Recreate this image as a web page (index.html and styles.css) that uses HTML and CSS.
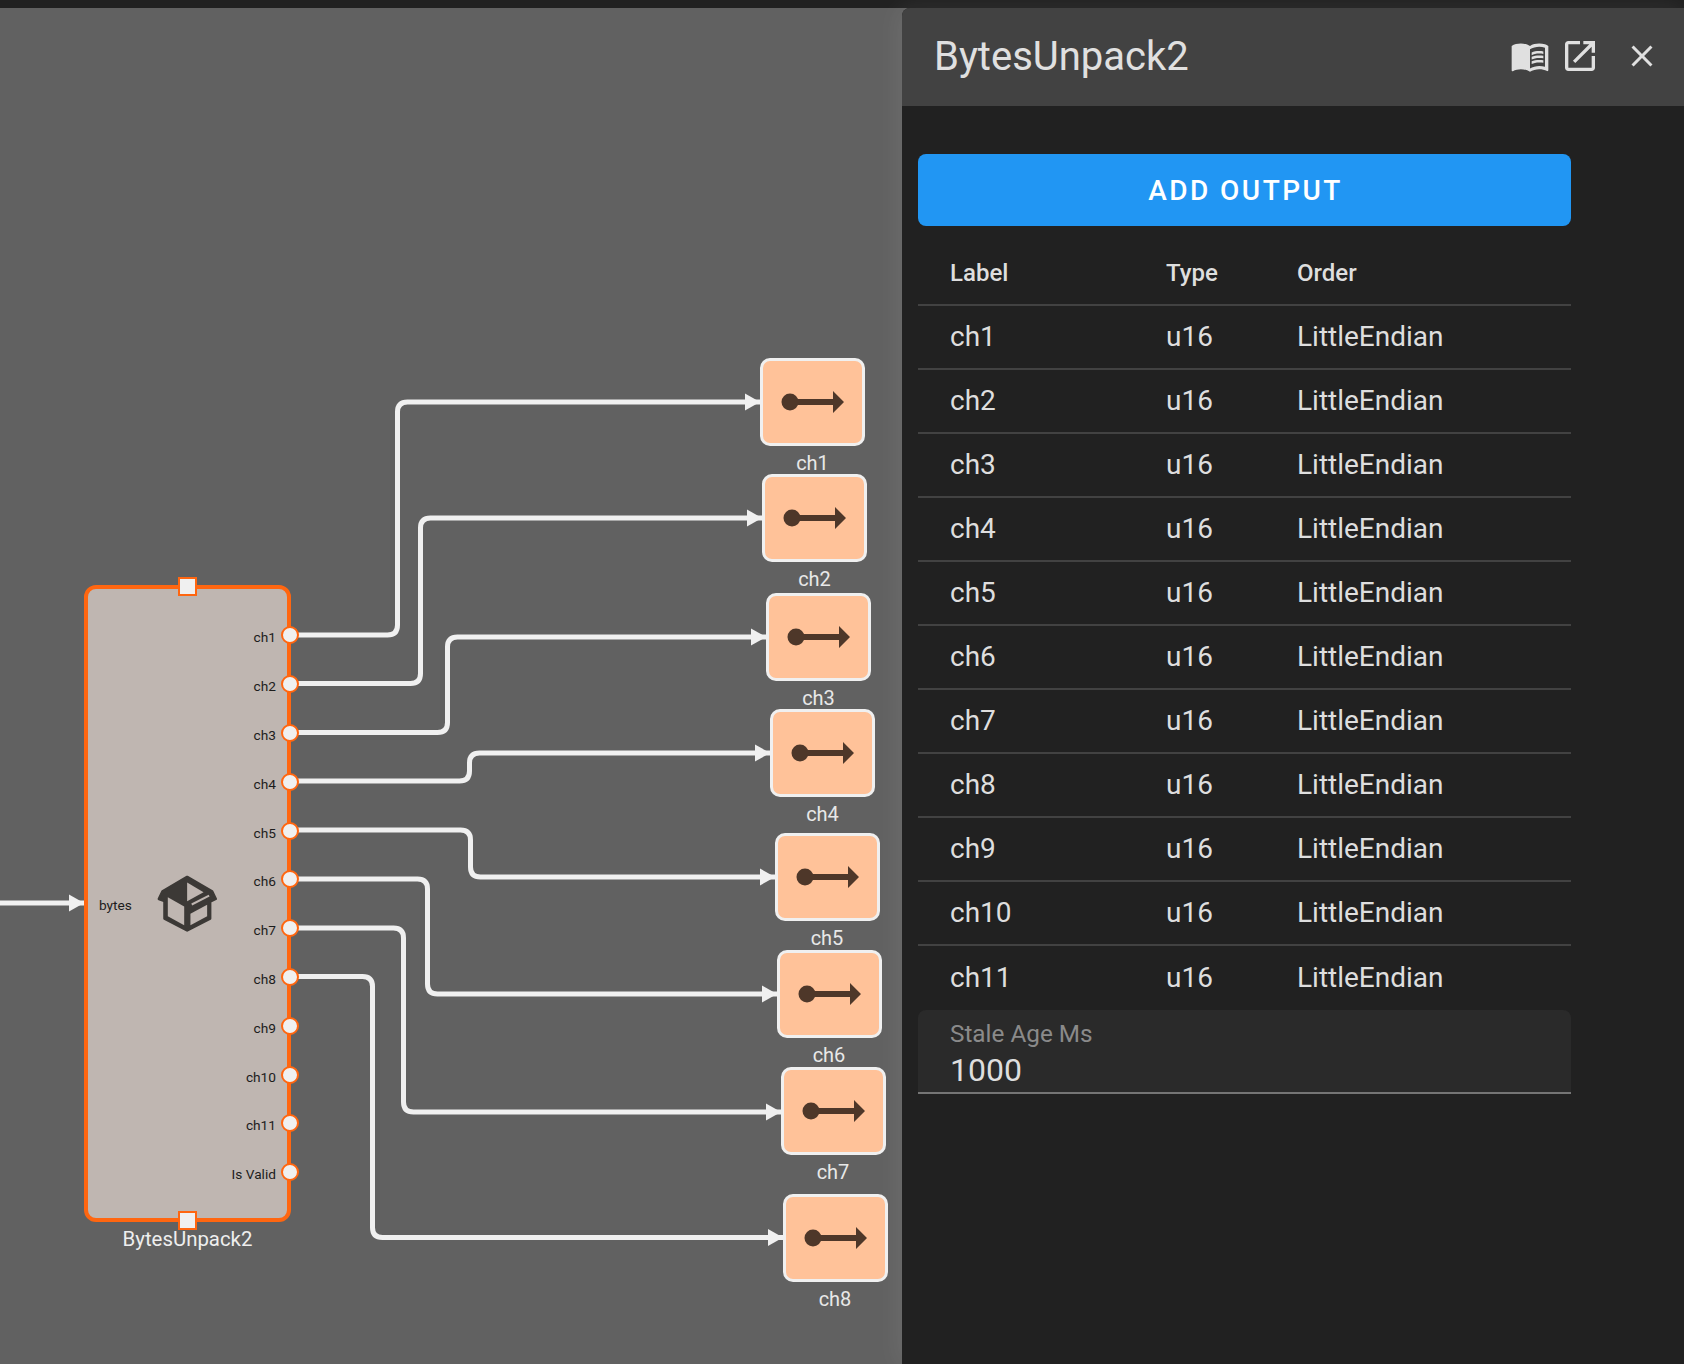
FILE: index.html
```html
<!DOCTYPE html>
<html lang="en">
<head>
<meta charset="utf-8">
<title>BytesUnpack2</title>
<link rel="stylesheet" href="styles.css">
</head>
<body>
<div class="app">
  <div class="topbar"></div>
  <div class="main">
    <div class="canvas">
      <svg class="wires" viewBox="0 8 902 1356" width="902" height="1356" aria-hidden="true">
        <defs>
          <marker id="head" markerUnits="userSpaceOnUse" markerWidth="16" markerHeight="18" refX="15" refY="9" orient="auto">
            <path d="M0 0.5 L15 9 L0 17.5 Z" fill="#f0f0f0"/>
          </marker>
        </defs>
        <g class="wire">
          <path marker-end="url(#head)" d="M0 903 H84"/>
          <path marker-end="url(#head)" d="M290 635 H387.5 Q397.5 635 397.5 625 V412 Q397.5 402 407.5 402 H760"/>
          <path marker-end="url(#head)" d="M290 683.5 H410.5 Q420.5 683.5 420.5 673.5 V528 Q420.5 518 430.5 518 H762"/>
          <path marker-end="url(#head)" d="M290 732.5 H437.5 Q447.5 732.5 447.5 722.5 V647 Q447.5 637 457.5 637 H766"/>
          <path marker-end="url(#head)" d="M290 781 H459.5 Q469.5 781 469.5 771 V763 Q469.5 753 479.5 753 H770"/>
          <path marker-end="url(#head)" d="M290 830 H460.5 Q470.5 830 470.5 840 V867 Q470.5 877 480.5 877 H775"/>
          <path marker-end="url(#head)" d="M290 879 H417.5 Q427.5 879 427.5 889 V984 Q427.5 994 437.5 994 H777"/>
          <path marker-end="url(#head)" d="M290 928 H393.5 Q403.5 928 403.5 938 V1102 Q403.5 1112 413.5 1112 H781"/>
          <path marker-end="url(#head)" d="M290 976.5 H362.5 Q372.5 976.5 372.5 986.5 V1227.5 Q372.5 1237.5 382.5 1237.5 H783"/>
        </g>
      </svg>

      <div class="block">
        <span class="handle handle-top"></span>
        <span class="in-label">bytes</span>
        <svg class="box-icon" viewBox="80 72 184 176" aria-hidden="true">
          <path class="box-fill" d="M172 78 L248 122 L259 145 L242 153 L242 205 L172 241 L103 205 L103 151 L86 145 L97 122 Z"/>
          <path class="box-light" d="M172 95 L222 125 L172 152 Z"/>
          <path class="box-light" d="M113 140 L163 168 L163 225 L113 198 Z"/>
          <path class="box-light" d="M182 190 L233 163 L233 198 L182 225 Z"/>
          <path class="box-slot" d="M186 162 L239 135"/>
        </svg>
        <div class="ports">
          <div class="port"><span>ch1</span><i></i></div>
          <div class="port"><span>ch2</span><i></i></div>
          <div class="port"><span>ch3</span><i></i></div>
          <div class="port"><span>ch4</span><i></i></div>
          <div class="port"><span>ch5</span><i></i></div>
          <div class="port"><span>ch6</span><i></i></div>
          <div class="port"><span>ch7</span><i></i></div>
          <div class="port"><span>ch8</span><i></i></div>
          <div class="port"><span>ch9</span><i></i></div>
          <div class="port"><span>ch10</span><i></i></div>
          <div class="port"><span>ch11</span><i></i></div>
          <div class="port"><span>Is Valid</span><i></i></div>
        </div>
        <span class="handle handle-bottom"></span>
        <span class="block-label">BytesUnpack2</span>
      </div>

      <div class="out o1"><div class="out-box"><svg viewBox="0 0 63 24"><circle cx="9" cy="12" r="8.5"/><path d="M9 9h43V1l11 11-11 11v-8H9z"/></svg></div><span>ch1</span></div>
      <div class="out o2"><div class="out-box"><svg viewBox="0 0 63 24"><circle cx="9" cy="12" r="8.5"/><path d="M9 9h43V1l11 11-11 11v-8H9z"/></svg></div><span>ch2</span></div>
      <div class="out o3"><div class="out-box"><svg viewBox="0 0 63 24"><circle cx="9" cy="12" r="8.5"/><path d="M9 9h43V1l11 11-11 11v-8H9z"/></svg></div><span>ch3</span></div>
      <div class="out o4"><div class="out-box"><svg viewBox="0 0 63 24"><circle cx="9" cy="12" r="8.5"/><path d="M9 9h43V1l11 11-11 11v-8H9z"/></svg></div><span>ch4</span></div>
      <div class="out o5"><div class="out-box"><svg viewBox="0 0 63 24"><circle cx="9" cy="12" r="8.5"/><path d="M9 9h43V1l11 11-11 11v-8H9z"/></svg></div><span>ch5</span></div>
      <div class="out o6"><div class="out-box"><svg viewBox="0 0 63 24"><circle cx="9" cy="12" r="8.5"/><path d="M9 9h43V1l11 11-11 11v-8H9z"/></svg></div><span>ch6</span></div>
      <div class="out o7"><div class="out-box"><svg viewBox="0 0 63 24"><circle cx="9" cy="12" r="8.5"/><path d="M9 9h43V1l11 11-11 11v-8H9z"/></svg></div><span>ch7</span></div>
      <div class="out o8"><div class="out-box"><svg viewBox="0 0 63 24"><circle cx="9" cy="12" r="8.5"/><path d="M9 9h43V1l11 11-11 11v-8H9z"/></svg></div><span>ch8</span></div>
    </div>

    <aside class="panel">
      <header class="panel-head">
        <h1>BytesUnpack2</h1>
        <div class="head-icons">
          <svg class="ic-book" viewBox="0 0 24 24"><path d="M21 5c-1.11-.35-2.33-.5-3.5-.5-1.95 0-4.05.4-5.5 1.5-1.45-1.1-3.55-1.5-5.5-1.5S2.45 4.9 1 6v14.65c0 .25.25.5.5.5.1 0 .15-.05.25-.05C3.1 20.45 5.05 20 6.5 20c1.95 0 4.05.4 5.5 1.5 1.35-.85 3.8-1.5 5.5-1.5 1.65 0 3.35.3 4.75 1.05.1.05.15.05.25.05.25 0 .5-.25.5-.5V6c-.6-.45-1.25-.75-2-1zm0 13.5c-1.1-.35-2.3-.5-3.5-.5-1.7 0-4.15.65-5.5 1.5V8c1.35-.85 3.8-1.5 5.5-1.5 1.2 0 2.4.15 3.5.5v11.5z"/><path d="M17.5 10.5c.88 0 1.73.09 2.5.26V9.24c-.79-.15-1.64-.24-2.5-.24-1.7 0-3.24.29-4.5.83v1.66c1.13-.64 2.7-.99 4.5-.99zM13 12.49v1.66c1.13-.64 2.7-.99 4.5-.99.88 0 1.73.09 2.5.26V11.9c-.79-.15-1.64-.24-2.5-.24-1.7 0-3.24.3-4.5.83zM17.5 14.33c-1.7 0-3.24.29-4.5.83v1.66c1.13-.64 2.7-.99 4.5-.99.88 0 1.73.09 2.5.26v-1.52c-.79-.16-1.64-.24-2.5-.24z"/></svg>
          <svg class="ic-open" viewBox="0 0 24 24"><path d="M19 19H5V5h7V3H5c-1.11 0-2 .9-2 2v14c0 1.1.89 2 2 2h14c1.1 0 2-.9 2-2v-7h-2v7zM14 3v2h3.59l-9.83 9.83 1.41 1.41L19 6.41V10h2V3h-7z"/></svg>
          <svg class="ic-close" viewBox="0 0 24 24"><path d="M19 6.41L17.59 5 12 10.59 6.41 5 5 6.41 10.59 12 5 17.59 6.41 19 12 13.41 17.59 19 19 17.59 13.41 12z"/></svg>
        </div>
      </header>
      <div class="panel-body">
        <button class="add-btn" type="button">ADD OUTPUT</button>
        <table class="outputs">
          <thead><tr><th>Label</th><th>Type</th><th>Order</th></tr></thead>
          <tbody>
            <tr><td>ch1</td><td>u16</td><td>LittleEndian</td></tr>
            <tr><td>ch2</td><td>u16</td><td>LittleEndian</td></tr>
            <tr><td>ch3</td><td>u16</td><td>LittleEndian</td></tr>
            <tr><td>ch4</td><td>u16</td><td>LittleEndian</td></tr>
            <tr><td>ch5</td><td>u16</td><td>LittleEndian</td></tr>
            <tr><td>ch6</td><td>u16</td><td>LittleEndian</td></tr>
            <tr><td>ch7</td><td>u16</td><td>LittleEndian</td></tr>
            <tr><td>ch8</td><td>u16</td><td>LittleEndian</td></tr>
            <tr><td>ch9</td><td>u16</td><td>LittleEndian</td></tr>
            <tr><td>ch10</td><td>u16</td><td>LittleEndian</td></tr>
            <tr><td>ch11</td><td>u16</td><td>LittleEndian</td></tr>
          </tbody>
        </table>
        <div class="field">
          <label>Stale Age Ms</label>
          <div class="field-value">1000</div>
        </div>
      </div>
    </aside>
  </div>
</div>
</body>
</html>
```
FILE: styles.css
```css
* { box-sizing: border-box; }
html, body { margin: 0; height: 100%; }
body { font-family: Roboto, "Liberation Sans", sans-serif; background: #212121; overflow: hidden; }
.app { display: flex; flex-direction: column; height: 1364px; }
.topbar { height: 8px; background: #212121; flex: none; }
.main { flex: 1; display: flex; min-height: 0; background: #616161; }

.canvas { position: relative; width: 902px; flex: none; background: #616161; overflow: hidden; }
.wires { position: absolute; left: 0; top: 0; display: block; }
.wire path { fill: none; stroke: #f0f0f0; stroke-width: 5; }
marker path { stroke: none; }

.block { position: absolute; left: 84px; top: 577px; width: 207px; height: 637px; background: #bfb6b1; border: 4px solid #ff6610; border-radius: 12px; }
.handle { position: absolute; left: 90px; width: 19px; height: 19px; background: #f0f0f0; border: 2px solid #ff6610; }
.handle-top { top: -12px; }
.handle-bottom { bottom: -12px; }
.in-label { position: absolute; left: 11px; top: 308px; font-size: 13.7px; line-height: 16px; color: #1c1c1c; }
.box-icon { position: absolute; left: 69px; top: 286px; width: 60.3px; height: 57.7px; }
.box-fill { fill: #3c3936; stroke: #3c3936; stroke-width: 8; stroke-linejoin: round; }
.box-light { fill: #bfb6b1; }
.box-slot { fill: none; stroke: #bfb6b1; stroke-width: 6; }
.ports { position: absolute; top: 22px; right: -12px; display: flex; flex-direction: column; align-items: flex-end; }
.port { height: 48.8px; display: flex; align-items: center; gap: 5px; font-size: 13.7px; color: #1c1c1c; }
.port span { position: relative; top: 2px; }
.port i { width: 18px; height: 18px; border-radius: 50%; background: #f0f0f0; border: 2px solid #ff6610; }
.block-label { position: absolute; left: -40px; right: -40px; top: 638px; text-align: center; font-size: 20.4px; line-height: 24px; color: #eeeeee; }

.out { position: absolute; width: 105px; display: flex; flex-direction: column; align-items: center; gap: 5px; font-size: 20px; line-height: 24px; color: #e8e8e8; }
.out-box { width: 105px; height: 88px; background: #ffc299; border: 3px solid #f0f0f0; border-radius: 10px; display: flex; align-items: center; justify-content: center; }
.out-box svg { width: 63px; height: 24px; overflow: visible; fill: #4e3729; }
.o1 { left: 760px; top: 350px; }
.o2 { left: 762px; top: 465.5px; }
.o3 { left: 766px; top: 585px; }
.o4 { left: 770px; top: 701px; }
.o5 { left: 774.5px; top: 825px; }
.o6 { left: 776.5px; top: 942px; }
.o7 { left: 780.5px; top: 1059px; }
.o8 { left: 782.5px; top: 1186px; }

.panel { flex: 1; min-width: 0; background: #212121; border-top-left-radius: 8px; box-shadow: -4px 0 24px rgba(255,255,255,.08); position: relative; }
.panel-head { height: 98px; background: #424242; border-top-left-radius: 8px; display: flex; align-items: center; padding-left: 32px; position: relative; }
.panel-head h1 { margin: 0; font-size: 40px; font-weight: 400; line-height: 48px; color: #e0e0e0; }
.head-icons { margin-left: auto; display: flex; align-items: center; padding-right: 24px; fill: #e0e0e0; position: relative; top: -1px; }
.ic-book { width: 40px; height: 40px; }
.ic-open { width: 40px; height: 40px; margin-left: 10px; }
.ic-close { width: 36px; height: 36px; margin-left: 24px; }

.panel-body { padding: 48px 0 0 16px; width: 669px; }
.add-btn { display: block; width: 100%; height: 72px; padding: 2px 0 0 2px; border: 0; border-radius: 8px; background: #2196f3; color: #fff; font: 500 28px/1 Roboto, sans-serif; letter-spacing: 2.45px; }
.outputs { width: 100%; border-collapse: collapse; table-layout: fixed; font-size: 28px; color: #dedede; }
.outputs th { height: 79px; padding: 15px 0 0 32px; text-align: left; font-size: 24px; font-weight: 500; border-bottom: 2px solid #424242; }
.outputs td { height: 64px; padding: 0 0 2px 32px; font-weight: 400; border-bottom: 2px solid #424242; }
.outputs tr:last-child td { border-bottom: 0; height: 65px; }
.outputs th:nth-child(1) { width: 216px; }
.outputs th:nth-child(2) { width: 131px; }
.field { height: 84px; background: #2a2a2a; border-radius: 8px 8px 0 0; border-bottom: 2px solid #757575; padding: 10px 32px 0; }
.field label { display: block; font-size: 24.3px; line-height: 28px; color: #8a8a8a; }
.field-value { font-size: 32px; line-height: 38px; margin-top: 3px; color: #dedede; }
```
